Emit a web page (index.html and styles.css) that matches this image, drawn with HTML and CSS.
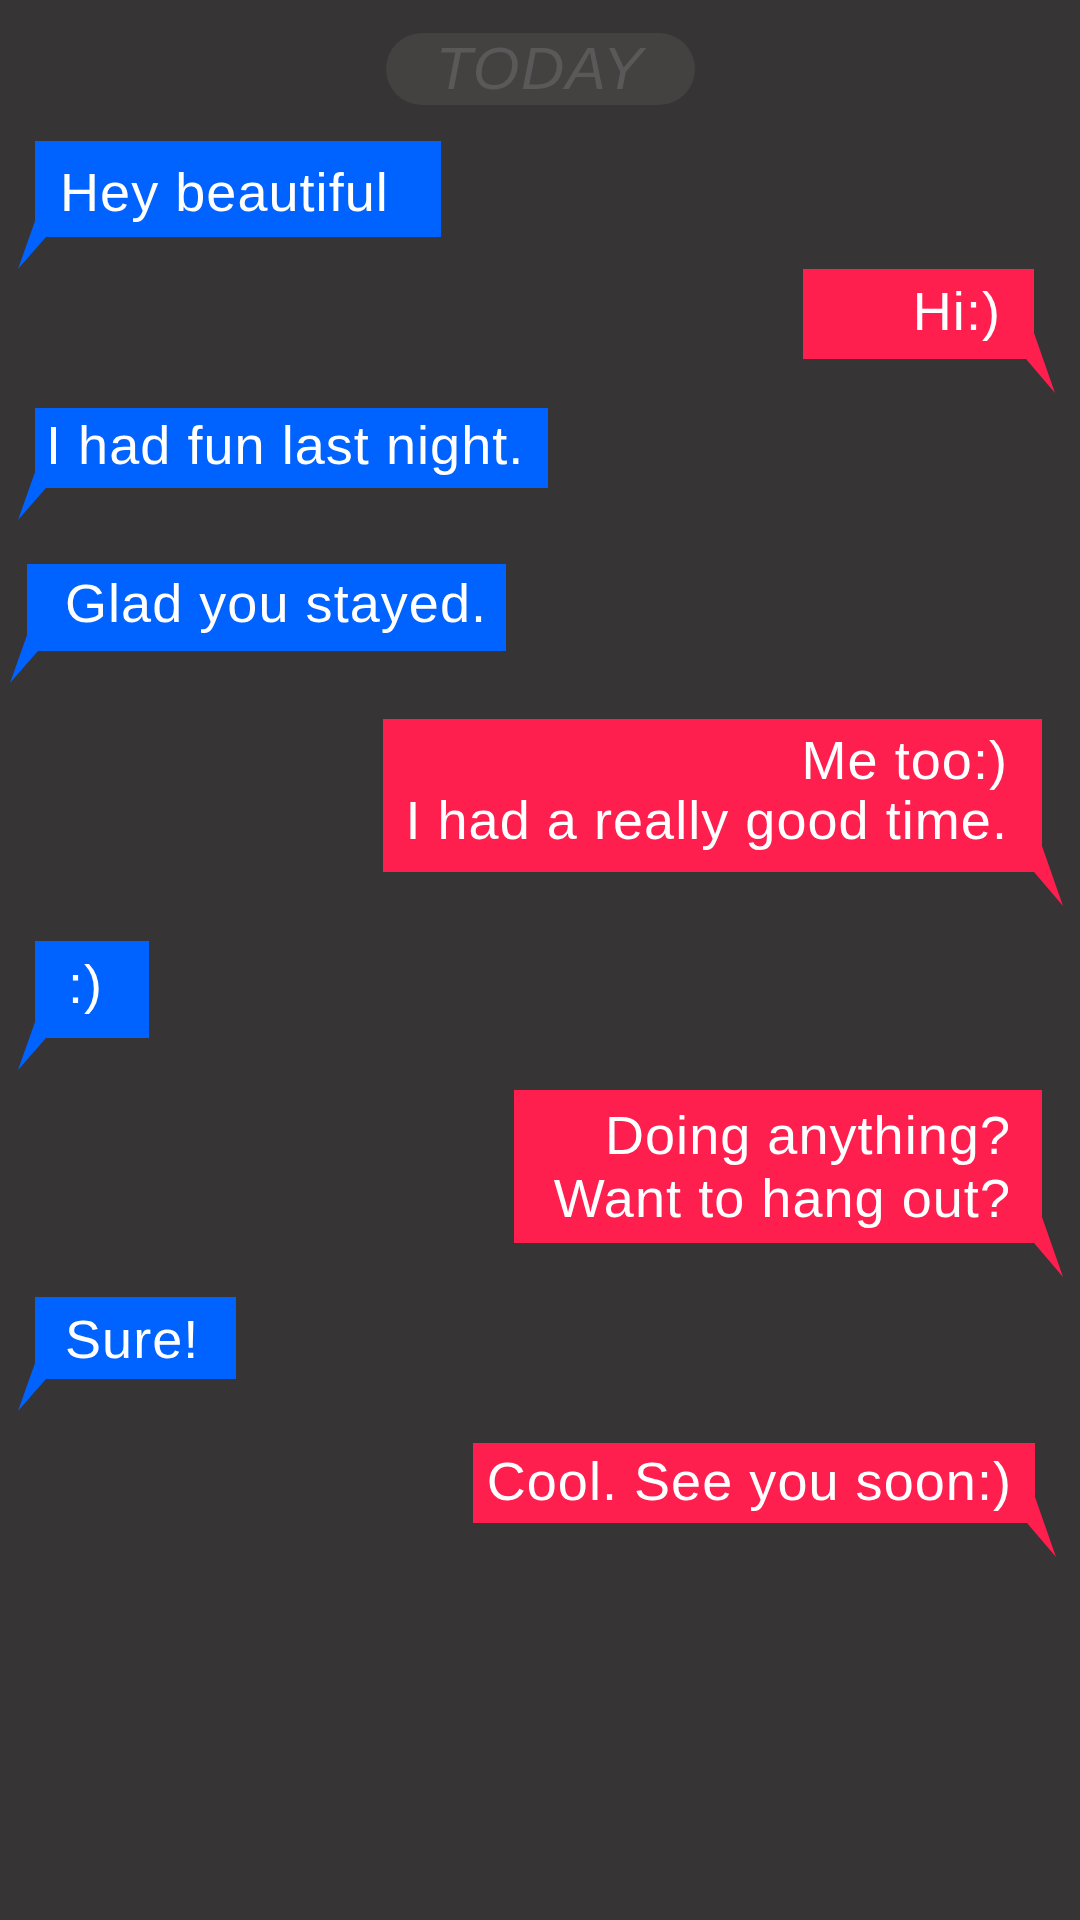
FILE: index.html
```html
<!DOCTYPE html>
<html lang="en">
<head>
<meta charset="utf-8">
<title>Chat</title>
<link rel="stylesheet" href="styles.css">
</head>
<body>
<div class="screen">
  <div class="day">TODAY</div>
  <div class="msg in m1">Hey beautiful</div>
  <div class="msg out m2">Hi:)</div>
  <div class="msg in m3">I had fun last night.</div>
  <div class="msg in m4">Glad you stayed.</div>
  <div class="msg out m5">Me too:)<br>I had a really good time.</div>
  <div class="msg in m6">:)</div>
  <div class="msg out m7">Doing anything?<br>Want to hang out?</div>
  <div class="msg in m8">Sure!</div>
  <div class="msg out m9">Cool. See you soon:)</div>
</div>
</body>
</html>
```

FILE: styles.css
```css
html, body {
  margin: 0;
  padding: 0;
  background: #363435;
}

body {
  font-family: "Liberation Sans", Arial, Helvetica, sans-serif;
}

.screen {
  width: 1080px;
  min-height: 1920px;
  box-sizing: border-box;
  padding-top: 33px;
  display: flex;
  flex-direction: column;
}

.day {
  align-self: center;
  width: 309px;
  height: 72px;
  border-radius: 36px;
  background: #434241;
  color: #5a5858;
  font-style: italic;
  font-size: 60px;
  line-height: 72px;
  letter-spacing: 1.5px;
  text-align: center;
}

.msg {
  position: relative;
  box-sizing: border-box;
  font-size: 54px;
  line-height: 60px;
  letter-spacing: 1.05px;
  color: #ffffff;
  white-space: nowrap;
}

.in {
  align-self: flex-start;
  background: #0062ff;
  text-align: left;
}

.out {
  align-self: flex-end;
  background: #ff1f4f;
  text-align: right;
}

.in::after {
  content: "";
  position: absolute;
  left: -17px;
  top: calc(100% - 16px);
  width: 28px;
  height: 48px;
  background: inherit;
  clip-path: polygon(17px 0, 0 48px, 28px 16px);
}

.out::after {
  content: "";
  position: absolute;
  right: -21px;
  top: calc(100% - 26px);
  width: 29px;
  height: 60px;
  background: inherit;
  clip-path: polygon(8px 0, 29px 60px, 0 26px);
}

.m1 { margin: 36px 0 0 35px; width: 406px; padding: 21px 0 15px 25px; }
.m2 { margin: 32px 46px 0 0; width: 231px; padding: 12px 33px 18px 0; }
.m3 { margin: 49px 0 0 35px; width: 513px; padding: 7px 0 13px 11px; }
.m4 { margin: 76px 0 0 27px; width: 479px; padding: 9px 0 18px 38px; }
.m5 { margin: 68px 38px 0 0; width: 659px; padding: 11px 34px 22px 0; }
.m6 { margin: 69px 0 0 35px; width: 114px; padding: 13px 0 24px 33px; }
.m7 { margin: 52px 38px 0 0; width: 528px; padding: 14px 31px 13px 0; line-height: 63px; }
.m8 { margin: 54px 0 0 35px; width: 201px; padding: 12px 0 10px 30px; }
.m9 { margin: 64px 45px 0 0; width: 562px; padding: 8px 23px 12px 0; }
```
